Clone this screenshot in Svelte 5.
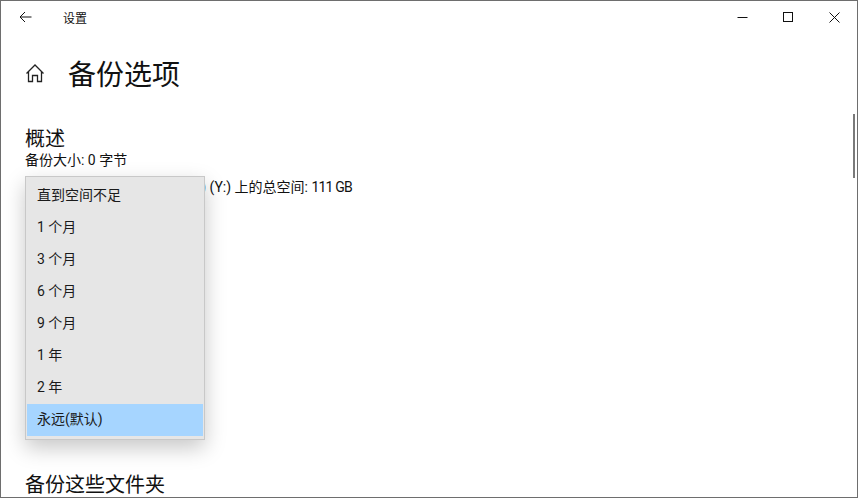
<script>
  const options = ['直到空间不足', '1 个月', '3 个月', '6 个月', '9 个月', '1 年', '2 年', '永远(默认)'];
  let selected = '永远(默认)';
</script>

<div class="window">
  <!-- title bar -->
  <div class="titlebar">
    <button class="back" aria-label="返回">
      <svg width="16" height="16" viewBox="0 0 16 16" fill="none" stroke="#111" stroke-width="1">
        <path d="M4 8H15.500M9 3L4 8L9 13" />
      </svg>
    </button>
    <span class="title">设置</span>
    <div class="controls">
      <div class="ctl">
        <svg width="11" height="11" viewBox="0 0 11 11" fill="none" stroke="#111"><path d="M0.5 5.5H10.5" /></svg>
      </div>
      <div class="ctl">
        <svg width="11" height="11" viewBox="0 0 11 11" fill="none" stroke="#111"><rect x="0.5" y="0.5" width="9" height="9" /></svg>
      </div>
      <div class="ctl">
        <svg width="11" height="11" viewBox="0 0 11 11" fill="none" stroke="#111"><path d="M0.5 0.5L10.5 10.5M10.5 0.5L0.5 10.5" /></svg>
      </div>
    </div>
  </div>

  <div class="content">
    <div class="heading">
      <svg class="home" width="20" height="20" viewBox="0 0 20 20" fill="none" stroke="#222" stroke-width="1.3">
        <path d="M1.5 10.500L10 2L18.500 10.500M3.500 8.500V18.500H7.500V12.500H12.500V18.500H16.500V8.500" />
      </svg>
      <h1>备份选项</h1>
    </div>

    <section class="overview">
      <h2>概述</h2>
      <p>备份大小: 0 字节</p>
      <p class="total">可用于备份的驱动器(新加卷&nbsp;) (Y:) 上的总空间: <span class="size">111 GB</span></p>
    </section>

    <h2 class="folders">备份这些文件夹</h2>

    <div class="menu">
      {#each options as opt}
        <div class="item" class:active={opt === selected}>{opt}</div>
      {/each}
    </div>

    <div class="scrollbar"></div>
  </div>
</div>

<style>
  :global(body) {
    margin: 0;
    background: #fff;
  }

  .window {
    position: relative;
    box-sizing: border-box;
    width: 858px;
    height: 498px;
    overflow: hidden;
    background: #fff;
    border: 1px solid #6e6e6e;
    font-family: Roboto, "Noto Sans CJK SC", sans-serif;
    color: #111;
  }

  .titlebar {
    display: flex;
    align-items: center;
    height: 32px;
  }

  .back {
    display: flex;
    align-items: center;
    justify-content: center;
    width: 46px;
    height: 32px;
    padding: 0;
    background: none;
    border: none;
  }

  .title {
    margin-left: 16px;
    font-size: 12px;
  }

  .controls {
    display: flex;
    margin-left: auto;
  }

  .ctl {
    display: flex;
    align-items: center;
    justify-content: center;
    width: 46px;
    height: 32px;
  }

  .content {
    position: relative;
    height: 465px;
    padding-left: 24px;
  }

  .heading {
    display: flex;
    align-items: center;
    height: 48px;
    margin-top: 16px;
  }

  h1 {
    margin: 0 0 0 23px;
    font-size: 28px;
    font-weight: 400;
  }

  h2 {
    margin: 0;
    font-size: 20px;
    font-weight: 400;
    line-height: 22px;
  }

  .overview {
    margin-top: 31px;
  }

  p {
    margin: 0;
    font-size: 14px;
    line-height: 20px;
  }

  .total {
    margin-top: 7px;
  }

  .size {
    letter-spacing: -0.8px;
  }

  .folders {
    margin-top: 277px;
  }

  .menu {
    position: absolute;
    left: 24px;
    top: 127px;
    width: 176px;
    padding: 3px 1px;
    background: #e6e6e6;
    border: 1px solid #c8c8c8;
    box-shadow: 0 8px 20px rgba(0, 0, 0, 0.22);
  }

  .item {
    box-sizing: border-box;
    height: 32px;
    padding-left: 10px;
    font-size: 14px;
    line-height: 30px;
    color: #1a1a1a;
  }

  .item.active {
    background: #a6d5ff;
  }

  .scrollbar {
    position: absolute;
    right: 2px;
    top: 65px;
    width: 2px;
    height: 64px;
    background: #7a7a7a;
  }
</style>
